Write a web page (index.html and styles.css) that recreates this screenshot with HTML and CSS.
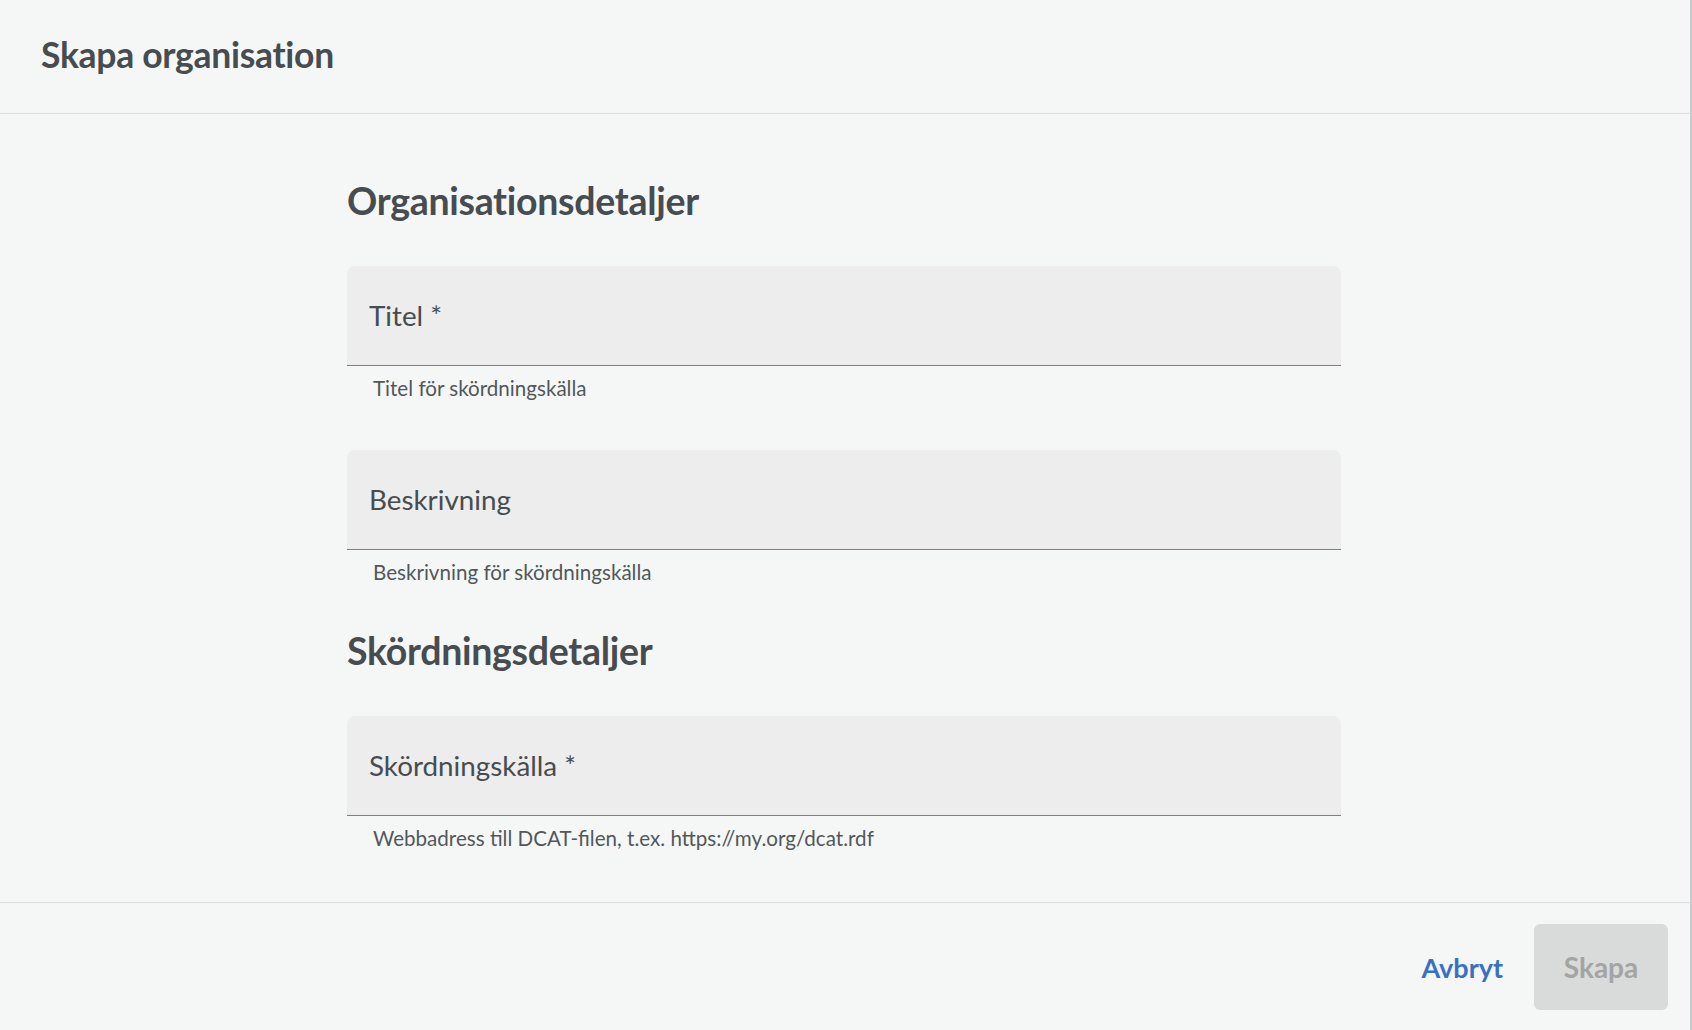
FILE: index.html
```html
<!DOCTYPE html>
<html lang="sv">
<head>
  <meta charset="UTF-8" />
  <meta name="viewport" content="width=device-width, initial-scale=1" />
  <title>Skapa organisation</title>
  <link rel="stylesheet" href="styles.css">
</head>
<body>
  <div class="dialog">
    <header class="dialog-header">
      <h1>Skapa organisation</h1>
    </header>

    <main class="dialog-body">
      <div class="form">
        <h2 class="section-title">Organisationsdetaljer</h2>

        <div class="field-group">
          <div class="field"><span class="field-label">Titel *</span></div>
          <p class="helper">Titel för skördningskälla</p>
        </div>

        <div class="field-group">
          <div class="field"><span class="field-label">Beskrivning</span></div>
          <p class="helper">Beskrivning för skördningskälla</p>
        </div>

        <h2 class="section-title second">Skördningsdetaljer</h2>

        <div class="field-group">
          <div class="field"><span class="field-label">Skördningskälla *</span></div>
          <p class="helper">Webbadress till DCAT-filen, t.ex. https://my.org/dcat.rdf</p>
        </div>
      </div>
    </main>

    <footer class="dialog-footer">
      <button class="btn-link">Avbryt</button>
      <button class="btn-primary" disabled>Skapa</button>
    </footer>
  </div>
</body>
</html>
```

FILE: styles.css
```css
body {
  margin: 0;
  font-family: Lato, "Open Sans", sans-serif;
  background: #f5f7f6;
  color: #474c50;
}
.dialog {
  width: 1690px;
  height: 1030px;
  border-right: 2px solid #c9cccf;
  display: flex;
  flex-direction: column;
}
.dialog-header {
  height: 108px;
  padding: 0 0 5px 41px;
  border-bottom: 1px solid #dcdfdf;
  display: flex;
  align-items: center;
  flex-shrink: 0;
}
.dialog-header h1 {
  margin: 0;
  font-size: 35.5px;
  font-weight: 700;
  letter-spacing: -0.3px;
}
.dialog-body {
  flex: 1;
}
.form {
  width: 994px;
  margin-left: 347px;
  padding-top: 65px;
}
.section-title {
  margin: 0 0 43px 0;
  font-size: 37.5px;
  line-height: 44px;
  font-weight: 700;
  letter-spacing: -0.3px;
}
.section-title.second {
  margin-top: -5px;
  margin-bottom: 43px;
}
.field-group {
  margin-bottom: 49px;
}
.field {
  height: 99px;
  background: #ecedec;
  border-radius: 8px 8px 0 0;
  border-bottom: 1px solid #7b8186;
  display: flex;
  align-items: center;
  padding-left: 22px;
}
.field-label {
  font-size: 27.8px;
}
.helper {
  margin: 9px 0 0 26px;
  font-size: 20.6px;
  line-height: 26px;
  color: #52575b;
}
.dialog-footer {
  height: 128px;
  border-top: 1px solid #dcdfdf;
  display: flex;
  justify-content: flex-end;
  align-items: flex-start;
  padding: 21px 22px 0 0;
  box-sizing: border-box;
  gap: 31px;
  flex-shrink: 0;
}
.btn-link {
  border: none;
  background: none;
  font-family: inherit;
  font-size: 27px;
  font-weight: 700;
  color: #3a70c4;
  height: 86px;
  padding: 0;
  cursor: pointer;
}
.btn-primary {
  border: none;
  border-radius: 6px;
  background: #d9dada;
  color: #a3a5a5;
  font-family: inherit;
  font-size: 28px;
  font-weight: 700;
  width: 134px;
  height: 86px;
}
```
